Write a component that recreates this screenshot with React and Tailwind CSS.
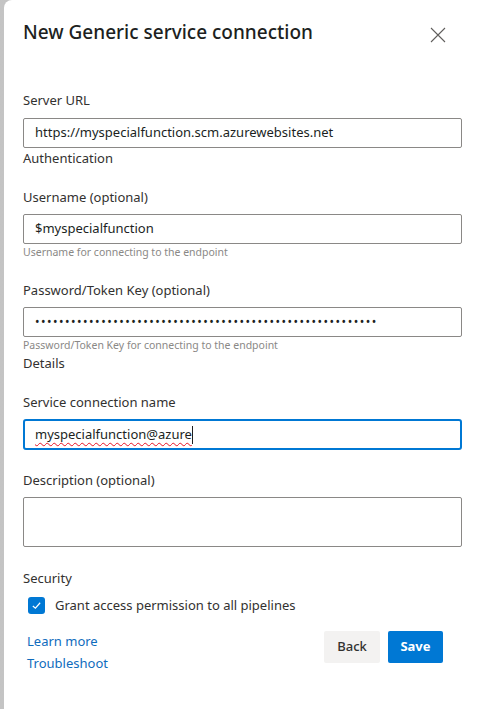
import React from 'react';

const font = { fontFamily: '"Noto Sans", "Open Sans", sans-serif' };

const Label = ({ children, className = '' }) => (
    <div className={`text-[13px] leading-[20px] text-[#323130] ${className}`}>{children}</div>
);

const Field = ({ children, className = '' }) => (
    <div className={`h-[30px] border border-[#8a8886] rounded-[2px] flex items-center px-[11px] text-[13px] text-[#201f1e] ${className}`}>
        {children}
    </div>
);

const Helper = ({ children }) => (
    <div className="text-[10.5px] leading-[15px] text-[#8a8886] mt-[1px]">{children}</div>
);

export default function App() {
    return (
        <div className="w-[482px] h-[709px] bg-gradient-to-r from-[#c4c4c4] to-[#a6a6a6] flex overflow-hidden" style={font}>
            <div className="ml-[4px] flex-1 bg-white rounded-tl-[8px] pl-[19px] pr-[20px]">
                {/* header */}
                <div className="flex items-center justify-between pt-[18px]">
                    <h1 className="text-[19px] leading-[28px] font-medium text-[#201f1e]">New Generic service connection</h1>
                    <button className="mr-[16px] mt-[6px] text-[#605e5c]">
                        <svg width="16" height="16" viewBox="0 0 16 16" fill="none" stroke="currentColor" strokeWidth="1.1">
                            <path d="M1 1L15 15M15 1L1 15" />
                        </svg>
                    </button>
                </div>

                <Label className="mt-[44px]">Server URL</Label>
                <Field className="mt-[8px]">https://myspecialfunction.scm.azurewebsites.net</Field>
                <Label>Authentication</Label>

                <Label className="mt-[19px]">Username (optional)</Label>
                <Field className="mt-[7px]">$myspecialfunction</Field>
                <Helper>Username for connecting to the endpoint</Helper>

                <Label className="mt-[20px]">Password/Token Key (optional)</Label>
                <Field className="mt-[7px]">
                    <span className="tracking-[1.5px] text-[12px]">{'•'.repeat(57)}</span>
                </Field>
                <Helper>Password/Token Key for connecting to the endpoint</Helper>
                <Label>Details</Label>

                <Label className="mt-[19px]">Service connection name</Label>
                <div className="mt-[7px] h-[31px] border-2 border-[#0078d4] rounded-[3px] flex items-center px-[10px] text-[13px] text-[#201f1e]">
                    <span className="underline decoration-wavy decoration-[#e81123] decoration-[1px] underline-offset-[3px]">myspecialfunction@azure</span>
                    <span className="w-[1px] h-[18px] bg-[#201f1e]" />
                </div>

                <Label className="mt-[20px]">Description (optional)</Label>
                <div className="mt-[7px] h-[50px] border border-[#8a8886] rounded-[2px]" />

                <Label className="mt-[21px]">Security</Label>
                <label className="mt-[8px] flex items-center gap-[10px] pl-[5px]">
                    <span className="w-[17px] h-[17px] rounded-[3px] bg-[#0078d4] flex items-center justify-center">
                        <svg width="11" height="11" viewBox="0 0 12 12" fill="none" stroke="white" strokeWidth="1.3">
                            <path d="M2 6.5L4.8 9L10 3" />
                        </svg>
                    </span>
                    <span className="text-[13px] text-[#323130]">Grant access permission to all pipelines</span>
                </label>

                {/* footer */}
                <div className="mt-[14px] flex items-start justify-between pr-[19px]">
                    <div className="pl-[4px] flex flex-col text-[13px] leading-[22px] text-[#0f6cbd]">
                        <a href="#">Learn more</a>
                        <a href="#">Troubleshoot</a>
                    </div>
                    <div className="flex gap-[8px] pt-[1px]">
                        <button className="w-[56px] h-[32px] rounded-[2px] bg-[#f3f2f1] text-[13px] font-medium text-[#323130]">Back</button>
                        <button className="w-[55px] h-[32px] rounded-[2px] bg-[#0078d4] text-[13px] font-bold text-white">Save</button>
                    </div>
                </div>
            </div>
        </div>
    );
}
